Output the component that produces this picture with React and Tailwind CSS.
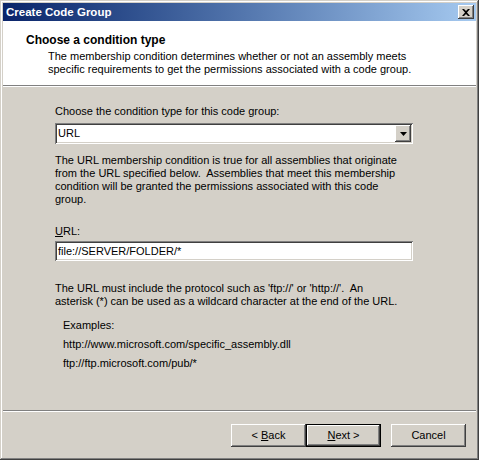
import React from "react";

const raised =
  "shadow-[inset_-1px_-1px_#404040,inset_1px_1px_#ffffff,inset_-2px_-2px_#808080,inset_2px_2px_#d4d0c8]";
const sunken =
  "shadow-[inset_1px_1px_#808080,inset_-1px_-1px_#ffffff,inset_2px_2px_#404040,inset_-2px_-2px_#d4d0c8]";

function Button({ children, isDefault }) {
  if (isDefault) {
    return (
      <div className="w-[75px] h-[23px] border border-black">
        <div className={`w-full h-full bg-[#d4d0c8] flex items-center justify-center ${raised}`}>
          {children}
        </div>
      </div>
    );
  }
  return (
    <div className={`w-[75px] h-[23px] bg-[#d4d0c8] flex items-center justify-center ${raised}`}>
      {children}
    </div>
  );
}

export default function App() {
  return (
    <div
      className="w-[479px] h-[460px] bg-[#d4d0c8] p-[3px] flex flex-col text-[11px] leading-[13px] text-black shadow-[inset_-1px_-1px_#404040,inset_1px_1px_#d4d0c8,inset_-2px_-2px_#808080,inset_2px_2px_#ffffff]"
      style={{ fontFamily: '"Liberation Sans", Arial, sans-serif' }}
    >
      {/* title bar */}
      <div className="h-[18px] bg-gradient-to-r from-[#0a246a] to-[#a6caf0] flex items-center justify-between pl-[3px] pr-[2px]">
        <span className="text-white font-bold text-[11.5px]">Create Code Group</span>
        <div className={`w-[16px] h-[14px] bg-[#d4d0c8] flex items-center justify-center ${raised}`}>
          <svg width="8" height="7" viewBox="0 0 8 7">
            <path d="M0 0h2l2 2 2-2h2L5 3.5 8 7H6L4 5 2 7H0l3-3.5z" fill="#000" />
          </svg>
        </div>
      </div>

      {/* header */}
      <div className="h-[64px] bg-white pt-[12px] pl-[23px]">
        <div className="font-bold text-[12px] leading-[15px]">Choose a condition type</div>
        <div className="pl-[22px] pt-[2px]">
          <div>The membership condition determines whether or not an assembly meets</div>
          <div>specific requirements to get the permissions associated with a code group.</div>
        </div>
      </div>
      <div className="h-px bg-[#808080]" />
      <div className="h-px bg-white" />

      {/* body */}
      <div className="flex-1 pl-[52px] pr-[63px] pt-[18px]">
        <div>Choose the condition type for this code group:</div>
        <div className={`mt-[5px] h-[21px] bg-white flex items-center pl-[3px] pr-[2px] ${sunken}`}>
          <span className="flex-1">URL</span>
          <div className={`w-[16px] h-[17px] bg-[#d4d0c8] flex items-center justify-center ${raised}`}>
            <svg width="7" height="4" viewBox="0 0 7 4">
              <path d="M0 0h7L3.5 4z" fill="#000" />
            </svg>
          </div>
        </div>
        <div className="mt-[10px] w-[348px]">
          The URL membership condition is true for all assemblies that originate from the URL specified
          below.&nbsp; Assemblies that meet this membership condition will be granted the permissions
          associated with this code group.
        </div>
        <div className="mt-[19px]">
          <span className="underline">U</span>RL:
        </div>
        <div className={`mt-[3px] h-[20px] bg-white flex items-center pl-[3px] ${sunken}`}>
          file://SERVER/FOLDER/*
        </div>
        <div className="mt-[21px] w-[348px]">
          The URL must include the protocol such as 'ftp://' or 'http://'.&nbsp; An asterisk (*) can be
          used as a wildcard character at the end of the URL.
        </div>
        <div className="pl-[8px] mt-[11px] flex flex-col gap-[6px]">
          <div>Examples:</div>
          <div>http://www.microsoft.com/specific_assembly.dll</div>
          <div>ftp://ftp.microsoft.com/pub/*</div>
        </div>
      </div>

      {/* footer */}
      <div className="h-px bg-[#808080]" />
      <div className="h-px bg-white" />
      <div className="h-[45px] flex items-start justify-end gap-[10px] pr-[10px] pt-[12px]">
        <div className="flex">
          <Button>
            &lt; <span className="underline ml-[3px]">B</span>ack
          </Button>
          <Button isDefault>
            <span className="underline">N</span>ext &gt;
          </Button>
        </div>
        <Button>Cancel</Button>
      </div>
    </div>
  );
}
